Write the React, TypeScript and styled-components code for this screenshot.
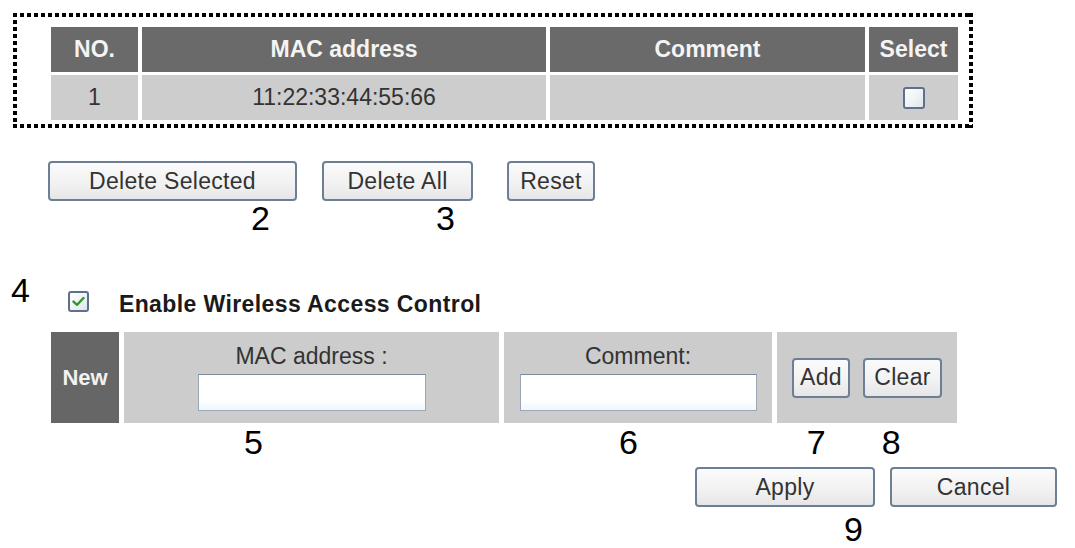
import React from "react";
import styled, { createGlobalStyle } from "styled-components";

const GlobalStyle = createGlobalStyle`
  html, body { margin: 0; padding: 0; background: #ffffff; }
  body { font-family: "Liberation Sans", Arial, sans-serif; color: #222; }
  * { box-sizing: border-box; }
`;

const Page = styled.div`
  width: 1075px;
  height: 548px;
  overflow: hidden;
  display: flex;
  flex-direction: column;
  align-items: flex-start;
`;

const dot = "linear-gradient(to right, #000 0 4px, transparent 4px 7px)";
const dotV = "linear-gradient(to bottom, #000 0 4px, transparent 4px 7px)";

const Frame = styled.div`
  margin: 13px 0 0 13px;
  width: 960px;
  padding: 14px 15px 8px 38px;
  background-image: ${dot}, ${dot}, ${dotV}, ${dotV};
  background-repeat: repeat-x, repeat-x, repeat-y, repeat-y;
  background-size: 7px 4px, 7px 4px, 4px 7px, 4px 7px;
  background-position: left top, left bottom, left top, right top;
`;

const ListGrid = styled.div`
  display: grid;
  grid-template-columns: 87px 404px 315px 89px;
  grid-auto-rows: 45px;
  column-gap: 4px;
  row-gap: 3px;
`;

const HeadCell = styled.div`
  background: #6a6a6a;
  color: #f4f4f4;
  font-weight: bold;
  font-size: 23px;
  display: flex;
  align-items: center;
  justify-content: center;
`;

const DataCell = styled.div`
  background: #cdcdcd;
  color: #333;
  font-size: 23px;
  display: flex;
  align-items: center;
  justify-content: center;
`;

const BoxMark = styled.span<{ $size: number }>`
  display: inline-flex;
  align-items: center;
  justify-content: center;
  width: ${(p) => p.$size}px;
  height: ${(p) => p.$size}px;
  border: 2px solid #5f718a;
  border-radius: 3px;
  background: linear-gradient(135deg, #ffffff 0%, #f1f3f6 50%, #dfe6ef 100%);
`;

const ButtonBar = styled.div`
  margin: 33px 0 0 48px;
  display: flex;
  align-items: flex-start;
`;

const ButtonGroup = styled.div<{ $gapLeft: number }>`
  display: flex;
  flex-direction: column;
  align-items: flex-start;
  margin-left: ${(p) => p.$gapLeft}px;
`;

const PushButton = styled.button<{ $w: number; $h?: number }>`
  width: ${(p) => p.$w}px;
  height: ${(p) => p.$h ?? 40}px;
  padding: 0;
  border: 2px solid #6d7f95;
  border-radius: 4px;
  background: linear-gradient(to bottom, #fbfbfb 0%, #f1f1f1 60%, #e6e6e6 100%);
  color: #333;
  font-family: "Liberation Sans", Arial, sans-serif;
  font-size: 23px;
  letter-spacing: 0.3px;
  line-height: 1;
  display: flex;
  align-items: center;
  justify-content: center;
`;

const Callout = styled.span<{ $left: number; $top?: number }>`
  display: block;
  margin-left: ${(p) => p.$left}px;
  margin-top: ${(p) => p.$top ?? 0}px;
  font-family: "Liberation Sans", Arial, sans-serif;
  font-size: 34px;
  line-height: 34px;
  height: 34px;
  color: #000;
`;

const EnableRow = styled.div`
  margin: 38px 0 0 11px;
  display: flex;
  align-items: flex-start;
`;

const EnableCheck = styled.div`
  margin: 18px 0 0 38px;
`;

const EnableLabel = styled.span`
  margin: 20px 0 0 30px;
  font-size: 23px;
  line-height: 22px;
  letter-spacing: 0.4px;
  font-weight: bold;
  color: #1a1a1a;
`;

const NewGrid = styled.div`
  margin: 17px 0 0 51px;
  display: grid;
  grid-template-columns: 68px 375px 268px 180px;
  column-gap: 5px;
  height: 91px;
`;

const NewTag = styled.div`
  background: #666666;
  color: #f2f2f2;
  font-weight: bold;
  font-size: 22px;
  display: flex;
  align-items: center;
  justify-content: center;
`;

const FieldCell = styled.div`
  background: #cccccc;
  display: flex;
  flex-direction: column;
  align-items: center;
  padding-top: 11px;
`;

const FieldLabel = styled.span`
  font-size: 23px;
  line-height: 26px;
  color: #333;
`;

const TextField = styled.input<{ $w: number }>`
  margin-top: 5px;
  width: ${(p) => p.$w}px;
  height: 37px;
  border: 1px solid #9aa7b6;
  border-top-color: #7b8b9f;
  background: linear-gradient(to bottom, #ffffff 0%, #ffffff 70%, #f2f7fc 100%);
  outline: none;
`;

const ActionCell = styled.div`
  background: #cccccc;
  display: flex;
  align-items: center;
  padding-left: 15px;
  gap: 13px;
`;

const CalloutRow = styled.div`
  margin-top: 2px;
  display: flex;
  align-items: flex-start;
`;

const ActionRow = styled.div`
  margin: 8px 0 0 695px;
  display: flex;
  gap: 15px;
`;

const Check = () => (
  <svg width="13" height="11" viewBox="0 0 13 11">
    <path d="M1.5 5.6 L5 8.8 L11.5 2" fill="none" stroke="#2f9a2f" strokeWidth="2.4" strokeLinecap="round" strokeLinejoin="round" />
  </svg>
);

export default function App() {
  return (
    <>
      <GlobalStyle />
      <Page>
        <Frame>
          <ListGrid>
            <HeadCell>NO.</HeadCell>
            <HeadCell>MAC address</HeadCell>
            <HeadCell>Comment</HeadCell>
            <HeadCell>Select</HeadCell>
            <DataCell>1</DataCell>
            <DataCell>11:22:33:44:55:66</DataCell>
            <DataCell></DataCell>
            <DataCell>
              <BoxMark $size={22} />
            </DataCell>
          </ListGrid>
        </Frame>

        <ButtonBar>
          <ButtonGroup $gapLeft={0}>
            <PushButton $w={249}>Delete Selected</PushButton>
            <Callout $left={203}>2</Callout>
          </ButtonGroup>
          <ButtonGroup $gapLeft={25}>
            <PushButton $w={151}>Delete All</PushButton>
            <Callout $left={114}>3</Callout>
          </ButtonGroup>
          <ButtonGroup $gapLeft={34}>
            <PushButton $w={88}>Reset</PushButton>
          </ButtonGroup>
        </ButtonBar>

        <EnableRow>
          <Callout $left={0}>4</Callout>
          <EnableCheck>
            <BoxMark $size={21}>
              <Check />
            </BoxMark>
          </EnableCheck>
          <EnableLabel>Enable Wireless Access Control</EnableLabel>
        </EnableRow>

        <NewGrid>
          <NewTag>New</NewTag>
          <FieldCell>
            <FieldLabel>MAC address :</FieldLabel>
            <TextField $w={228} />
          </FieldCell>
          <FieldCell>
            <FieldLabel>Comment:</FieldLabel>
            <TextField $w={237} />
          </FieldCell>
          <ActionCell>
            <PushButton $w={58}>Add</PushButton>
            <PushButton $w={79}>Clear</PushButton>
          </ActionCell>
        </NewGrid>

        <CalloutRow>
          <Callout $left={244}>5</Callout>
          <Callout $left={356}>6</Callout>
          <Callout $left={169}>7</Callout>
          <Callout $left={56}>8</Callout>
        </CalloutRow>

        <ActionRow>
          <PushButton $w={180}>Apply</PushButton>
          <PushButton $w={167}>Cancel</PushButton>
        </ActionRow>

        <Callout $left={844} $top={5}>9</Callout>
      </Page>
    </>
  );
}
